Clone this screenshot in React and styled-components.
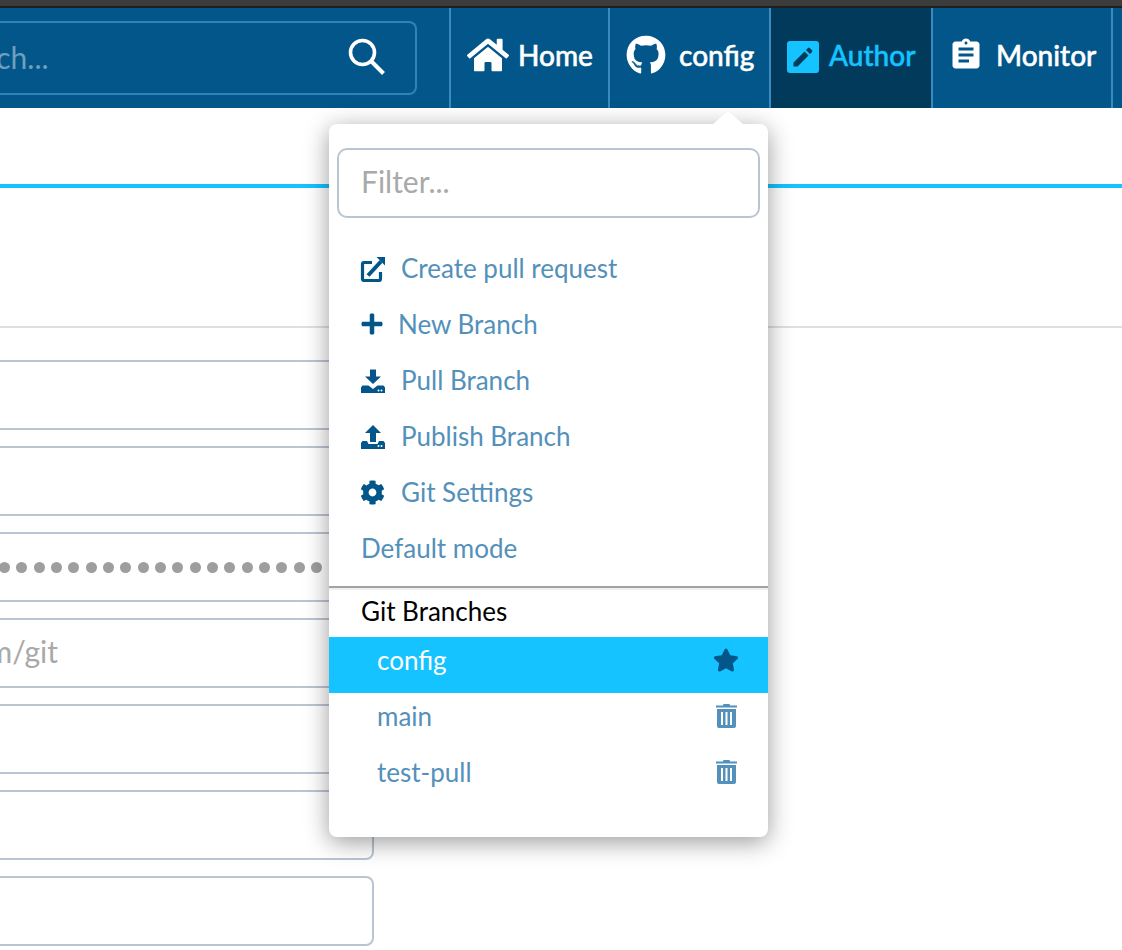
import React from 'react';
import styled, { createGlobalStyle } from 'styled-components';
import { FaHome, FaGithub, FaCog, FaStar, FaPlus } from 'react-icons/fa';
import { MdAssignment } from 'react-icons/md';

const Global = createGlobalStyle`
  html, body { margin: 0; padding: 0; background: #fff; }
  body { font-family: Lato, "Open Sans", sans-serif; overflow: hidden; }
  * { box-sizing: border-box; }
`;
const Page = styled.div`width: 1122px; height: 950px; position: relative; overflow: hidden; background: #fff;`;
const WindowBar = styled.div`height: 8px; background: #3c3c3c; border-bottom: 2px solid #1f1f1f;`;
const Nav = styled.nav`height: 100px; background: #02568a; display: flex; align-items: stretch;`;
const SearchZone = styled.div`width: 449px; flex: none; display: flex; align-items: center; padding: 0 32px 0 0;`;
const Search = styled.div`
  flex: 1; height: 74px; margin-left: -60px; border: 2px solid #2f83b8; border-left: none; border-radius: 8px;
  display: flex; align-items: center; justify-content: space-between; padding: 0 29px 2px 0;
  color: #6fa0bd; font-size: 30px; overflow: hidden;
`;
const SearchText = styled.span`margin-left: -1px;`;
const NavItem = styled.a`
  width: ${p => p.$w}px; flex: none; display: flex; align-items: center; gap: ${p => p.$gap || 10}px;
  padding: 0 0 6px ${p => p.$pl || 0}px;
  border-left: 2px solid #3a8abf;
  background: ${p => p.$active ? '#023a5c' : 'transparent'};
  color: ${p => p.$active ? '#14c3ff' : '#fff'};
  font-size: 28px; font-weight: 500; white-space: nowrap;
  -webkit-text-stroke: .5px currentColor;
`;
const Body = styled.main`display: flex; flex-direction: column;`;
const Band = styled.div`height: 80px; border-bottom: 4px solid #14c3ff;`;
const Rule = styled.div`height: 140px; border-bottom: 2px solid #e0e0e0;`;
const Form = styled.div`display: flex; flex-direction: column; gap: 16px; margin: 32px 0 0 -20px; width: 394px;`;
const Field = styled.div`
  height: 70px; border: 2px solid #bac5d2; border-radius: 8px; padding: 0 ${p => p.$right || 0}px 4px 20px;
  display: flex; align-items: center; justify-content: ${p => p.$end ? 'flex-end' : 'flex-start'};
  color: #a9a9a9; font-size: 30px; background: #fff; white-space: nowrap;
  overflow: hidden;
`;
const Dots = styled.div`display: flex; gap: 6.33px; padding-right: 50px; margin-top: 4px;`;
const Dot = styled.span`width: 11px; height: 11px; border-radius: 50%; background: #9e9e9e; flex: none;`;
const Menu = styled.div`
  position: absolute; left: 329px; top: 124px; width: 439px; height: 713px; background: #fff; border-radius: 8px;
  box-shadow: 0 5px 24px rgba(0,0,0,.4);
`;
const Arrow = styled.div`
  position: absolute; left: 383px; top: -13px; width: 0; height: 0;
  border-left: 16px solid transparent; border-right: 16px solid transparent; border-bottom: 14px solid #fff;
`;
const Filter = styled.div`
  margin: 24px 8px 0; height: 70px; border: 2px solid #bac5d2; border-radius: 10px; display: flex; align-items: center;
  padding: 0 0 4px 22px; color: #a9a9a9; font-size: 30px;
`;
const Actions = styled.div`display: flex; flex-direction: column; margin-top: 22px;`;
const Action = styled.a`
  height: 56px; display: flex; align-items: center; padding-left: ${p => p.$pad || 31}px; gap: ${p => p.$gap || 16}px; color: #5390ba; font-size: 26px;
  svg { color: #02568a; flex: none; }
`;
const Divider = styled.div`height: 4px; margin-top: 10px; background: #efefef; border-top: 2px solid #a3a3a3;`;
const SectionTitle = styled.div`height: 47px; padding: 0 0 6px 32px; color: #000; font-size: 26px; display: flex; align-items: center;`;
const Branch = styled.div`
  height: 56px; display: flex; align-items: center; justify-content: space-between; padding: 0 31px 10px 48px;
  background: ${p => p.$on ? '#14c3ff' : 'transparent'}; color: ${p => p.$on ? '#fff' : '#5390ba'}; font-size: 26px;
  svg { flex: none; color: ${p => p.$on ? '#02568a' : '#5390ba'}; }
`;
const Star = styled(FaStar)`margin-right: -2px;`;
const AuthorGlyph = styled.svg`margin-top: 4px;`;

const SearchIcon = () => (
  <svg width="38" height="38" viewBox="0 0 38 38" fill="none" stroke="#fff" strokeWidth="3.6">
    <circle cx="14.5" cy="14.5" r="12" /><path d="M23.5 23.5 L35.5 35.5" strokeWidth="4" />
  </svg>
);
const AuthorIcon = () => (
  <AuthorGlyph width="32" height="32" viewBox="0 0 32 32">
    <rect width="32" height="32" rx="3" fill="#14c3ff" />
    <path fill="#023a5c" d="M6.5 21.5 V25.5 H10.5 L21.5 14.5 L17.5 10.5 Z M23 13 L25 11 a1.2 1.2 0 0 0 0 -1.7 L22.7 7 a1.2 1.2 0 0 0 -1.7 0 L19 9 Z" />
  </AuthorGlyph>
);
const ExternalIcon = () => (
  <svg width="26" height="28" viewBox="0 0 26 28" fill="none" stroke="#02568a" strokeWidth="3.2">
    <path d="M12 8.5 H4 a1.5 1.5 0 0 0 -1.5 1.5 V25 a1.5 1.5 0 0 0 1.5 1.5 H19 a1.5 1.5 0 0 0 1.5 -1.5 V18" />
    <path d="M8 21.5 L21 7.5" strokeWidth="4" />
    <path fill="#02568a" stroke="none" d="M16.5 3 H25 V11.5 Z" />
  </svg>
);
const TrayIcon = ({ up }) => (
  <svg width="25" height="25" viewBox={up ? "-1 -1 25 25" : "-1 -1.5 25 25"}>
    <path fill="#02568a" d={up ? "M12 0 L20 8 H15 V17 H9 V8 H4 Z" : "M9 0 H15 V7 H20 L12 14.5 L4 7 H9 Z"} />
    <path fill="#02568a" d={up
      ? "M0 18 L1.5 16 H6 L7.5 19 H16.5 L18 16 H22.5 L24 18 V24 H0 Z"
      : "M0 18 L1.5 16 H7.5 L12 19.5 L16.5 16 H22.5 L24 18 V24 H0 Z"} />
    <circle cx="17.5" cy="21" r="1" fill="#fff" /><circle cx="20.5" cy="21" r="1" fill="#fff" />
  </svg>
);
const TrashIcon = () => (
  <svg width="21" height="24" viewBox="0 0 21 24">
    <path fill="currentColor" d="M7.5 0 H13.5 L14.2 1.6 H21 V3.6 H0 V1.6 H6.8 Z" />
    <path fill="currentColor" fillRule="evenodd" d="M1 5 H20 V22 a2 2 0 0 1 -2 2 H3 a2 2 0 0 1 -2 -2 Z M5 8 V21 H7 V8 Z M9.5 8 V21 H11.5 V8 Z M14 8 V21 H16 V8 Z" />
  </svg>
);

export default function App() {
  return (
    <Page>
      <Global />
      <WindowBar />
      <Nav>
        <SearchZone>
          <Search><SearchText>Search...</SearchText><SearchIcon /></Search>
        </SearchZone>
        <NavItem $w={159} $pl={16} $gap={9}><FaHome size={42} />Home</NavItem>
        <NavItem $w={161} $pl={16} $gap={13}><FaGithub size={40} />config</NavItem>
        <NavItem $w={162} $pl={16} $active><AuthorIcon />Author</NavItem>
        <NavItem $w={180} $pl={15} $gap={12}><MdAssignment size={36} />Monitor</NavItem>
        <NavItem $w={11} />
      </Nav>
      <Body>
        <Band />
        <Rule />
        <Form>
          <Field />
          <Field />
          <Field $end><Dots>{Array.from({ length: 22 }, (_, i) => <Dot key={i} />)}</Dots></Field>
          <Field $end $right={314}>https://github.com/git</Field>
          <Field />
          <Field />
          <Field />
        </Form>
      </Body>
      <Menu>
        <Arrow />
        <Filter>Filter...</Filter>
        <Actions>
          <Action $gap={15}><ExternalIcon />Create pull request</Action>
          <Action $gap={14}><FaPlus size={24} />New Branch</Action>
          <Action><TrayIcon />Pull Branch</Action>
          <Action><TrayIcon up />Publish Branch</Action>
          <Action><FaCog size={25} />Git Settings</Action>
          <Action $pad={32}>Default mode</Action>
        </Actions>
        <Divider />
        <SectionTitle>Git Branches</SectionTitle>
        <Branch $on>config<Star size={26} /></Branch>
        <Branch>main<TrashIcon /></Branch>
        <Branch>test-pull<TrashIcon /></Branch>
      </Menu>
    </Page>
  );
}
